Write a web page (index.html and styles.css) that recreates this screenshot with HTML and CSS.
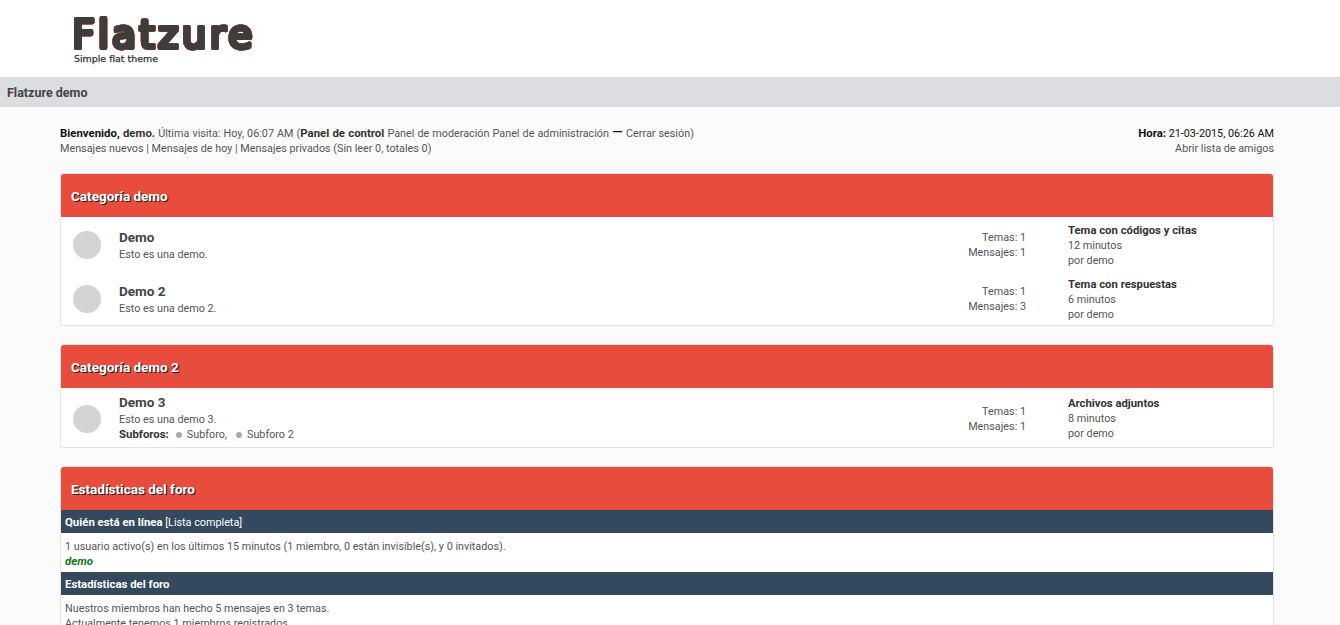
FILE: index.html
```html
<!DOCTYPE html>
<html lang="es">
<head>
<meta charset="utf-8">
<title>Flatzure demo</title>
<link rel="stylesheet" href="styles.css">
</head>
<body>
<header class="logo-bar">
  <svg class="logo" width="200" height="62" viewBox="0 0 200 62">
    <text class="logo-main" x="2.2" y="40" textLength="180">Flatzure</text>
    <text class="logo-sub" x="4" y="54" textLength="84" lengthAdjust="spacingAndGlyphs">Simple flat theme</text>
  </svg>
</header>
<nav class="nav-bar"><a href="#">Flatzure demo</a></nav>
<main class="wrapper">
  <section class="welcome">
    <div>
      <div class="welcome-main"><strong class="strong-black">Bienvenido, </strong><strong>demo.</strong> Última visita: Hoy, 06:07 AM (<strong>Panel de control</strong> <a href="#">Panel de moderación</a> <a href="#">Panel de administración</a> <span class="dash">—</span> <a href="#">Cerrar sesión</a>)</div>
      <div><a href="#">Mensajes nuevos</a> | <a href="#">Mensajes de hoy</a> | <a href="#">Mensajes privados</a> (Sin leer 0, totales 0)</div>
    </div>
    <div class="welcome-right">
      <div><strong class="strong-black">Hora:</strong> <span class="black">21-03-2015, 06:26 AM</span></div>
      <div><a href="#">Abrir lista de amigos</a></div>
    </div>
  </section>

  <section class="block">
    <h2 class="block-head">Categoría demo</h2>
    <div class="forum">
      <span class="dot"></span>
      <div class="info"><a class="title" href="#">Demo</a><div>Esto es una demo.</div></div>
      <div class="stats"><div>Temas: 1</div><div>Mensajes: 1</div></div>
      <div class="last"><a class="last-title" href="#">Tema con códigos y citas</a><div>12 minutos</div><div>por demo</div></div>
    </div>
    <div class="forum">
      <span class="dot"></span>
      <div class="info"><a class="title" href="#">Demo 2</a><div>Esto es una demo 2.</div></div>
      <div class="stats"><div>Temas: 1</div><div>Mensajes: 3</div></div>
      <div class="last"><a class="last-title" href="#">Tema con respuestas</a><div>6 minutos</div><div>por demo</div></div>
    </div>
  </section>

  <section class="block">
    <h2 class="block-head">Categoría demo 2</h2>
    <div class="forum forum-sub">
      <span class="dot"></span>
      <div class="info"><a class="title" href="#">Demo 3</a><div>Esto es una demo 3.</div>
        <div class="subs"><strong>Subforos:</strong><span class="sub"><i class="mini"></i><a href="#">Subforo,</a></span><span class="sub"><i class="mini"></i><a href="#">Subforo 2</a></span></div>
      </div>
      <div class="stats"><div>Temas: 1</div><div>Mensajes: 1</div></div>
      <div class="last"><a class="last-title" href="#">Archivos adjuntos</a><div>8 minutos</div><div>por demo</div></div>
    </div>
  </section>

  <section class="block">
    <h2 class="block-head">Estadísticas del foro</h2>
    <h3 class="sub-head"><strong>Quién está en línea</strong> [Lista completa]</h3>
    <div class="stat-body">
      <div>1 usuario activo(s) en los últimos 15 minutos (1 miembro, 0 están invisible(s), y 0 invitados).</div>
      <div><a class="online" href="#">demo</a></div>
    </div>
    <h3 class="sub-head"><strong>Estadísticas del foro</strong></h3>
    <div class="stat-body">
      <div>Nuestros miembros han hecho 5 mensajes en 3 temas.</div>
      <div>Actualmente tenemos 1 miembros registrados.</div>
    </div>
  </section>
</main>
</body>
</html>
```
FILE: styles.css
```css
* { box-sizing: border-box; }
html, body { height: 625px; overflow: hidden; }
body {
  margin: 0;
  background: #fbfbfb;
  color: #555;
  font: 10.8px/15px Roboto, "Open Sans", sans-serif;
}
a { color: inherit; text-decoration: none; }
strong { color: #333; font-weight: 700; font-size: 11.4px; }
.strong-black, .black, .dash { color: #111; }
.dash { font-size: 14px; line-height: 0; }

.logo-bar { height: 77px; background: #fff; padding: 8px 0 0 70px; }
.logo { display: block; }
.logo-main {
  font: 400 39px "DejaVu Sans", sans-serif;
  fill: #3d3d3d;
  stroke: #3d3d3d;
  stroke-width: 4px;
  stroke-linejoin: round;
  stroke-linecap: round;
  filter: drop-shadow(0 0 .5px #e74c3c) drop-shadow(0 0 .5px #e74c3c) drop-shadow(0 0 .4px #e74c3c);
}
.logo-sub { font: 400 9px "DejaVu Sans", sans-serif; fill: #333; stroke: #333; stroke-width: .25px; }

.nav-bar {
  height: 30px;
  background: #dcdde1;
  padding: 8px 7px 0;
  font-size: 12.5px;
  font-weight: 700;
  color: #444;
}

.wrapper { padding: 19px 66px 0 60px; }
.welcome { display: flex; justify-content: space-between; height: 30px; margin-bottom: 17px; }
.welcome-main { word-spacing: .4px; height: 15px; }
.welcome-right { text-align: right; }

.block {
  background: #fff;
  border: 1px solid #e4e4e4;
  border-radius: 4px 4px 0 0;
  margin-bottom: 18px;
}
.block-head {
  margin: 0;
  height: 43px;
  background: #e74c3c;
  border-radius: 3px 3px 0 0;
  padding: 14px 10px 0;
  color: #fff;
  font-size: 13.5px;
  line-height: 17px;
  font-weight: 700;
  text-shadow: 1px 1px 0 #222;
}
.forum { display: flex; height: 54px; padding: 0 12px; }
.forum-sub { height: 59px; }
.dot {
  flex: none;
  width: 28px;
  height: 28px;
  margin-top: 14px;
  border-radius: 50%;
  background: #d3d3d3;
}
.forum-sub .dot { margin-top: 17px; }
.info { flex: 1; margin-left: 18px; padding-top: 11px; }
.forum-sub .info { padding-top: 5px; }
.title { display: block; color: #444; font-size: 13.5px; line-height: 19px; font-weight: 700; }
.subs { display: flex; }
.sub { display: flex; align-items: center; margin-left: 7px; }
.sub + .sub { margin-left: 9px; }
.mini {
  width: 6px;
  height: 6px;
  margin-right: 5px;
  border-radius: 50%;
  background: #aaa;
}
.stats { width: 200px; text-align: right; padding-top: 13px; }
.forum-sub .stats { padding-top: 16px; }
.last { width: 193px; margin-left: 42px; padding-top: 6px; }
.forum-sub .last { padding-top: 8px; }
.last-title { display: block; color: #333; font-weight: 700; font-size: 11.3px; }

.sub-head {
  margin: 0;
  height: 23px;
  padding: 5px 4px 0;
  background: #34495e;
  color: #fff;
  font-size: 10.8px;
  line-height: 15px;
  font-weight: 400;
}
.sub-head strong { color: #fff; }
.stat-body { height: 39px; padding: 6px 4px 0; }
.online { color: #0a7a12; font-weight: 700; font-style: italic; font-size: 11.4px; }
```
